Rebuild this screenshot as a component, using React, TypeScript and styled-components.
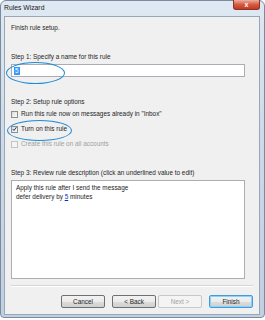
import React from "react";
import styled, { createGlobalStyle } from "styled-components";

const GlobalStyle = createGlobalStyle`
  html, body {
    margin: 0;
    padding: 0;
    background: #ffffff;
  }
  body {
    font-family: "Liberation Sans", "DejaVu Sans", sans-serif;
    font-size: 6.4px;
    color: #1e1e1e;
  }
`;

const Frame = styled.div`
  position: relative;
  width: 265px;
  height: 318px;
  box-sizing: border-box;
  display: flex;
  flex-direction: column;
  background: linear-gradient(180deg, #dfe9f3 0%, #cddbea 40%, #bfd0e2 100%);
  border: 1px solid #7b8a9c;
  border-radius: 6px 6px 4px 4px;
`;

const TitleBar = styled.div`
  height: 15px;
  display: flex;
  align-items: flex-start;
  justify-content: space-between;
  padding: 0 4px 0 3px;
`;

const Title = styled.span`
  margin-top: 3px;
  font-size: 6.8px;
  color: #1a1a1a;
`;

const CloseButton = styled.div`
  width: 27px;
  height: 10px;
  margin-top: -1px;
  box-sizing: border-box;
  display: flex;
  align-items: center;
  justify-content: center;
  border: 1px solid #8a3328;
  border-top: none;
  border-radius: 0 0 3px 3px;
  background: linear-gradient(180deg, #eab0a2 0%, #d85a42 50%, #c23a22 100%);
  color: #ffffff;
  font-size: 7px;
  font-weight: bold;
  line-height: 1;
`;

const Client = styled.div`
  flex: 1;
  margin: 0 4px 2px 3px;
  background: #f0f0f0;
  border: 1px solid #9aa6b4;
  padding: 6px 6px 0 6px;
  display: flex;
  flex-direction: column;
`;

const Label = styled.div<{ $top?: number }>`
  margin-top: ${(p) => p.$top ?? 0}px;
  line-height: 10px;
  white-space: nowrap;
`;

const NameField = styled.div`
  margin-top: 2px;
  margin-right: 8px;
  height: 13px;
  box-sizing: border-box;
  background: #ffffff;
  border: 1px solid #abadb3;
  display: flex;
  align-items: center;
  padding-left: 2px;
`;

const Selected = styled.span`
  background: #3399ff;
  color: #ffffff;
  line-height: 8px;
  padding: 0 1px;
`;

const OptionRow = styled.div<{ $disabled?: boolean; $top?: number }>`
  margin-top: ${(p) => p.$top ?? 5}px;
  display: flex;
  align-items: center;
  gap: 3px;
  line-height: 10px;
  color: ${(p) => (p.$disabled ? "#a0a0a0" : "#1e1e1e")};
`;

const Box = styled.span<{ $disabled?: boolean }>`
  width: 5px;
  height: 5px;
  border: 1px solid ${(p) => (p.$disabled ? "#c4c4c4" : "#8e8f8f")};
  background: ${(p) => (p.$disabled ? "#f4f4f4" : "linear-gradient(135deg, #dcdcdc, #fbfbfb)")};
  display: flex;
  align-items: center;
  justify-content: center;
`;

const Description = styled.div`
  margin-top: 2px;
  margin-right: 8px;
  height: 99px;
  box-sizing: border-box;
  background: #ffffff;
  border: 1px solid #abadb3;
  padding: 2px 4px;
  line-height: 9px;
`;

const Link = styled.span`
  color: #0033cc;
  text-decoration: underline;
`;

const Separator = styled.div`
  margin-top: 6px;
  border-top: 1px solid #d5d5d5;
  border-bottom: 1px solid #ffffff;
`;

const ButtonRow = styled.div`
  margin-top: 8px;
  display: flex;
  justify-content: flex-end;
  gap: 7px;
`;

const Group = styled.div`
  display: flex;
  gap: 2px;
`;

const Button = styled.div<{ $disabled?: boolean; $focused?: boolean }>`
  width: 42px;
  height: 11px;
  display: flex;
  align-items: center;
  justify-content: center;
  border: 1px solid ${(p) => (p.$focused ? "#3c9ee0" : p.$disabled ? "#c8c8c8" : "#707070")};
  border-radius: 2px;
  background: ${(p) =>
    p.$disabled
      ? "#f4f4f4"
      : "linear-gradient(180deg, #f2f2f2 0%, #ebebeb 50%, #dddddd 51%, #cfcfcf 100%)"};
  box-shadow: ${(p) => (p.$focused ? "inset 0 0 0 1px #8fd0f5" : "none")};
  color: ${(p) => (p.$disabled ? "#a3a3a3" : "#1e1e1e")};
  font-size: 6.4px;
`;

const Ring = styled.div<{ $x: number; $y: number; $w: number; $h: number }>`
  position: absolute;
  left: ${(p) => p.$x}px;
  top: ${(p) => p.$y}px;
  width: ${(p) => p.$w}px;
  height: ${(p) => p.$h}px;
  border: 1.5px solid #1f8bd6;
  border-radius: 50%;
  pointer-events: none;
`;

const Check = () => (
  <svg width="6" height="6" viewBox="0 0 6 6">
    <path d="M0.8 3 L2.4 4.8 L5.3 0.8" stroke="#2a3f7a" strokeWidth="1.2" fill="none" />
  </svg>
);

export default function App() {
  return (
    <>
      <GlobalStyle />
      <Frame>
        <TitleBar>
          <Title>Rules Wizard</Title>
          <CloseButton>x</CloseButton>
        </TitleBar>
        <Client>
          <Label>Finish rule setup.</Label>
          <Label $top={19}>Step 1: Specify a name for this rule</Label>
          <NameField>
            <Selected>5</Selected>
          </NameField>
          <Label $top={20}>Step 2: Setup rule options</Label>
          <OptionRow $top={2}>
            <Box />
            Run this rule now on messages already in "Inbox"
          </OptionRow>
          <OptionRow>
            <Box>
              <Check />
            </Box>
            Turn on this rule
          </OptionRow>
          <OptionRow $disabled>
            <Box $disabled />
            Create this rule on all accounts
          </OptionRow>
          <Label $top={19}>Step 3: Review rule description (click an underlined value to edit)</Label>
          <Description>
            Apply this rule after I send the message
            <br />
            defer delivery by <Link>5</Link> minutes
          </Description>
          <Separator />
          <ButtonRow>
            <Button>Cancel</Button>
            <Group>
              <Button>&lt; Back</Button>
              <Button $disabled>Next &gt;</Button>
            </Group>
            <Button $focused>Finish</Button>
          </ButtonRow>
        </Client>
        <Ring $x={5} $y={61} $w={57} $h={20} />
        <Ring $x={6} $y={119} $w={63} $h={19} />
      </Frame>
    </>
  );
}
